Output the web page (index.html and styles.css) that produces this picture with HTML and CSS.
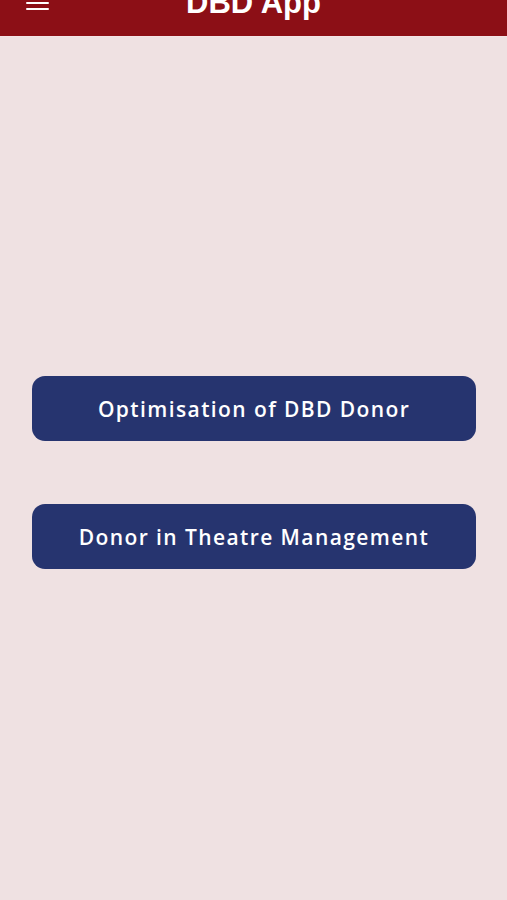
FILE: index.html
```html
<!DOCTYPE html>
<html lang="en">

<head>
  <meta charset="UTF-8" />
  <meta name="viewport" content="width=device-width, initial-scale=1.0" />
  <title>DBD App</title>
  <link rel="stylesheet" href="styles.css">
</head>

<body>
  <!-- Top bar -->
  <header class="app-bar">
    <button class="menu-btn" aria-label="Menu">
      <span></span>
      <span></span>
      <span></span>
    </button>
    <h1 class="app-title">DBD App</h1>
  </header>

  <!-- Main menu -->
  <main class="menu">
    <button class="menu-item">Optimisation of DBD Donor</button>
    <button class="menu-item">Donor in Theatre Management</button>
  </main>
</body>

</html>
```

FILE: styles.css
```css
body {
  margin: 0;
  background: #efe1e2;
  font-family: 'Liberation Sans', Arial, sans-serif;
  min-height: 100vh;
  overflow: hidden;
}

.app-bar {
  height: 67px;
  margin-top: -31px;
  background: #8c0f16;
  display: flex;
  align-items: center;
  justify-content: center;
  position: relative;
  box-shadow: 0 1px 0 #f4e4e6;
}

.app-title {
  margin: 0;
  color: #ffffff;
  font-size: 31px;
  font-weight: bold;
  line-height: 1;
}

.menu-btn {
  position: absolute;
  left: 26px;
  top: 50%;
  transform: translateY(-50%);
  width: 23px;
  padding: 0;
  border: none;
  background: none;
  display: flex;
  flex-direction: column;
  gap: 4px;
}

.menu-btn span {
  display: block;
  height: 2px;
  background: #ffffff;
  border-radius: 1px;
}

.menu {
  display: flex;
  flex-direction: column;
  gap: 63px;
  padding: 340px 31px 0 32px;
}

.menu-item {
  height: 65px;
  border: none;
  border-radius: 13px;
  background: #26346f;
  color: #ffffff;
  font-family: 'Open Sans', sans-serif;
  font-size: 21px;
  font-weight: 600;
  letter-spacing: 1.4px;
  cursor: pointer;
}
```
